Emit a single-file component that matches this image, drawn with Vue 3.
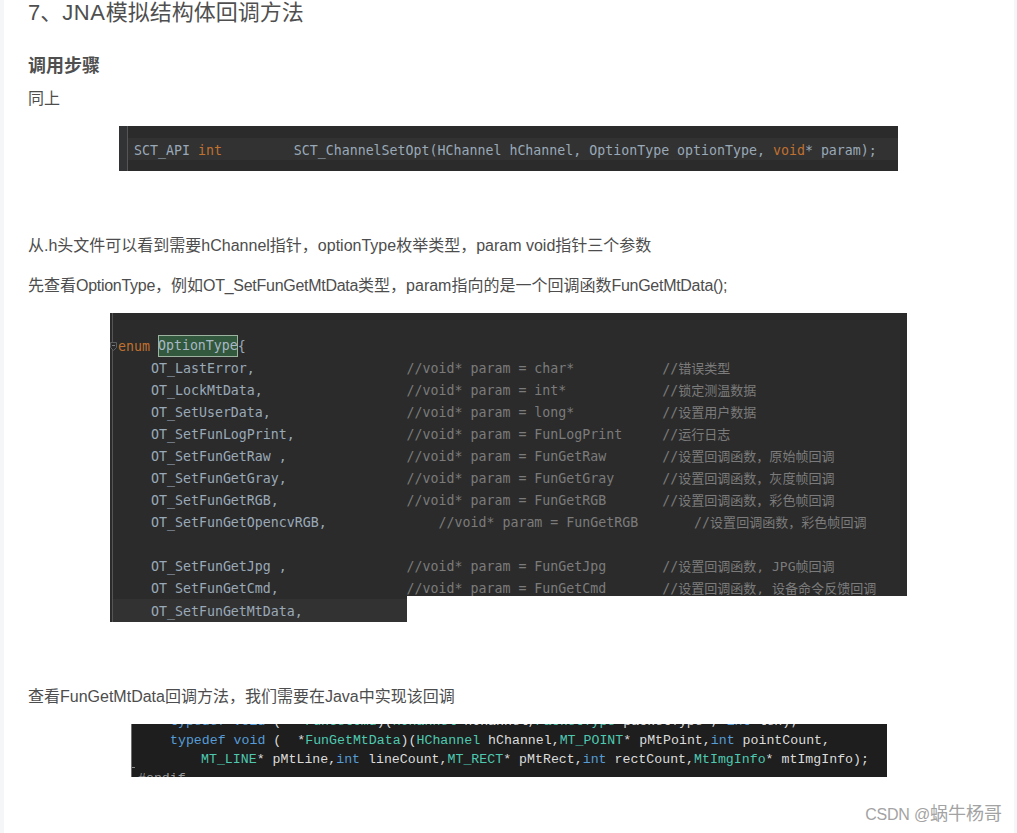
<script setup>
const gutterLine = {
  a: 'SCT_API ',
  b: 'int',
  c: '         SCT_ChannelSetOpt(HChannel hChannel, OptionType optionType, ',
  d: 'void',
  e: '* param);',
}
const gapA = '  *'
const enumRows = [
  ['OT_LastError,                   ', '//void* param = char*           //', '错误类型'],
  ['OT_LockMtData,                  ', '//void* param = int*            //', '锁定测温数据'],
  ['OT_SetUserData,                 ', '//void* param = long*           //', '设置用户数据'],
  ['OT_SetFunLogPrint,              ', '//void* param = FunLogPrint     //', '运行日志'],
  ['OT_SetFunGetRaw ,               ', '//void* param = FunGetRaw       //', '设置回调函数，原始帧回调'],
  ['OT_SetFunGetGray,               ', '//void* param = FunGetGray      //', '设置回调函数，灰度帧回调'],
  ['OT_SetFunGetRGB,                ', '//void* param = FunGetRGB       //', '设置回调函数，彩色帧回调'],
  ['OT_SetFunGetOpencvRGB,              ', '//void* param = FunGetRGB       //', '设置回调函数，彩色帧回调'],
  ['', '', ''],
  ['OT_SetFunGetJpg ,               ', '//void* param = FunGetJpg       //', '设置回调函数, JPG帧回调'],
  ['OT_SetFunGetCmd,                ', '//void* param = FunGetCmd       //', '设置回调函数, 设备命令反馈回调'],
]
</script>

<template>
  <div class="page">
    <main class="article">
      <h1 class="title">7、<span class="wide">JNA</span>模拟结构体回调方法</h1>
      <h3 class="sub">调用步骤</h3>
      <p class="para first">同上</p>

      <div class="shot shot-a">
        <div class="a-gutter"></div>
        <div class="a-body">
          <div class="a-line"><span class="id">{{ gutterLine.a }}</span><span class="kw">{{ gutterLine.b }}</span><span class="id">{{ gutterLine.c }}</span><span class="kw">{{ gutterLine.d }}</span><span class="id">{{ gutterLine.e }}</span></div>
        </div>
      </div>

      <p class="para gap">从.h头文件可以看到需要hChannel指针，optionType枚举类型，param void指针三个参数</p>
      <p class="para next">先查看<span class="tight">OptionType</span>，例如<span class="tight">OT_SetFunGetMtData</span>类型，param指向的是一个回调函数<span class="tight">FunGetMtData();</span></p>

      <div class="shot-b">
        <div class="b-main">
          <div class="b-row enum-row">
            <svg class="fold" width="8" height="11" viewBox="0 0 8 11" aria-hidden="true"><path d="M.5 1.5h6v5l-3 3-3-3z" fill="#2b2b2b" stroke="#5c5f60"/><path d="M2 4.5h3" stroke="#7a7d7e"/></svg>
            <span class="kw">enum </span><span class="match">OptionType</span><span class="id">{</span>
          </div>
          <div v-for="(r, i) in enumRows" :key="i" class="b-row indented"><span class="id">{{ r[0] }}</span><span class="cm">{{ r[1] }}</span><span class="cm cjk">{{ r[2] }}</span></div>
        </div>
        <div class="b-tail">
          <div class="b-tail-line"><span class="id">OT_SetFunGetMtData,</span></div>
        </div>
      </div>

      <p class="para gap">查看FunGetMtData回调方法，我们需要在Java中实现该回调</p>

      <div class="shot-c">
        <div class="tick"></div>
        <div class="c-clip">
          <div class="c-row"><span class="blue">typedef void</span> ({{ gapA }}<span class="teal">FunGetCmd</span>)(<span class="teal">HChannel</span> hChannel,<span class="teal">PacketType</span> packetType , <span class="blue">int</span> len);</div>
          <div class="c-row"><span class="blue">typedef void</span> ({{ gapA }}<span class="teal">FunGetMtData</span>)(<span class="teal">HChannel</span> hChannel,<span class="teal">MT_POINT</span>* pMtPoint,<span class="blue">int</span> pointCount,</div>
          <div class="c-row c-wrap"><span class="teal">MT_LINE</span>* pMtLine,<span class="blue">int</span> lineCount,<span class="teal">MT_RECT</span>* pMtRect,<span class="blue">int</span> rectCount,<span class="teal">MtImgInfo</span>* mtImgInfo);</div>
          <div class="c-row c-end">#endif</div>
        </div>
      </div>
    </main>
    <div class="mark"><span class="mark-latin">CSDN @</span>蜗牛杨哥</div>
  </div>
</template>

<style scoped>
.page {
  position: relative;
  height: 833px;
  overflow: hidden;
  background: #f5f6f7;
  padding: 0 3px 0 4px;
  box-sizing: border-box;
  font-family: "Liberation Sans", "Noto Sans CJK SC", sans-serif;
}
.article {
  height: 833px;
  background: #fff;
  padding-left: 24px;
  overflow: hidden;
}
.title {
  margin: 0;
  font-size: 22px;
  line-height: 26px;
  font-weight: 400;
  color: #4f4f4f;
}
.wide { letter-spacing: 0.6px; }
.sub {
  margin: 27px 0 0;
  font-size: 18px;
  line-height: 26px;
  font-weight: 700;
  color: #4f4f4f;
}
.para {
  margin: 16px 0 0;
  font-size: 16px;
  line-height: 26px;
  height: 24px;
  color: #4d4d4d;
}
.para.first { margin-top: 7px; }
.para.gap { margin-top: 62px; }
.tight { letter-spacing: -0.28px; }

.shot-a, .shot-b, .shot-c { margin-top: 16px; }
.a-line, .b-row, .b-tail-line, .c-row {
  white-space: pre;
}
.id, .kw, .cm, .match { font-family: "DejaVu Sans Mono", "Noto Sans CJK SC", monospace; font-size: 13.28px; }

.shot-a {
  display: flex;
  width: 779px;
  height: 45px;
  margin-left: 91px;
  background: #2b2b2b;
}
.a-gutter {
  width: 8px;
  background: #313335;
  border-right: 1px solid #555;
}
.a-body {
  flex: 1;
  padding-top: 12px;
}
.a-line {
  height: 22px;
  line-height: 23px;
  background: #323232;
  padding-left: 6px;
}
.id { color: #9aa9b8; }
.kw { color: #c0702f; }
.cm { color: #7b7b7b; }
.cjk { font-size: 13.04px; }

.shot-b {
  width: 797px;
  margin-left: 82px;
}
.b-main {
  width: 797px;
  height: 283px;
  box-sizing: border-box;
  padding: 22px 0 0 8px;
  background: #2b2b2b;
  overflow: hidden;
  box-shadow: inset 2px 0 0 #2b2b2b, inset 3px 0 0 #555;
}
.b-row {
  position: relative;
  height: 22px;
  line-height: 22px;
}
.fold {
  position: absolute;
  left: -8px;
  top: 6px;
}
.indented { padding-left: 33px; }
.match {
  display: inline-block;
  vertical-align: top;
  height: 22px;
  box-sizing: border-box;
  line-height: 22px;
  color: #a9b7c6;
  background: #32593d;
  outline: 1px solid #9db3a0;
  outline-offset: -1px;
}
.b-tail {
  width: 297px;
  height: 26px;
  box-sizing: border-box;
  padding-top: 3px;
  background: #2b2b2b;
  box-shadow: inset 2px 0 0 #2b2b2b, inset 3px 0 0 #555;
}
.b-tail-line {
  height: 23px;
  line-height: 23px;
  margin-left: 3px;
  padding-left: 38px;
  background: #323232;
}
.shot-c {
  position: relative;
  width: 756px;
  height: 53px;
  box-sizing: border-box;
  margin-left: 103px;
  background: #1e1e1e;
  border-left: 1px solid #6f6f6f;
  overflow: hidden;
}
.tick {
  position: absolute;
  left: 0;
  top: 43px;
  width: 3px;
  height: 1px;
  background: #8a8a8a;
}
.c-clip { margin-top: -12px; padding-left: 38px; }
.c-row {
  height: 19px;
  line-height: 19px;
  font-family: "Liberation Mono", "Noto Sans CJK SC", monospace;
  font-size: 13.25px;
  color: #dcdcdc;
}
.c-wrap { padding-left: 31px; }
.c-end { margin-left: -32px; color: #9b9b9b; }
.blue { color: #569cd6; }
.teal { color: #4ec9b0; }
.mark {
  position: absolute;
  right: 15px;
  bottom: 6px;
  font-size: 18px;
  line-height: 24px;
  color: #a3a3a3;
}
.mark-latin { font-size: 16px; letter-spacing: -0.2px; }
</style>
